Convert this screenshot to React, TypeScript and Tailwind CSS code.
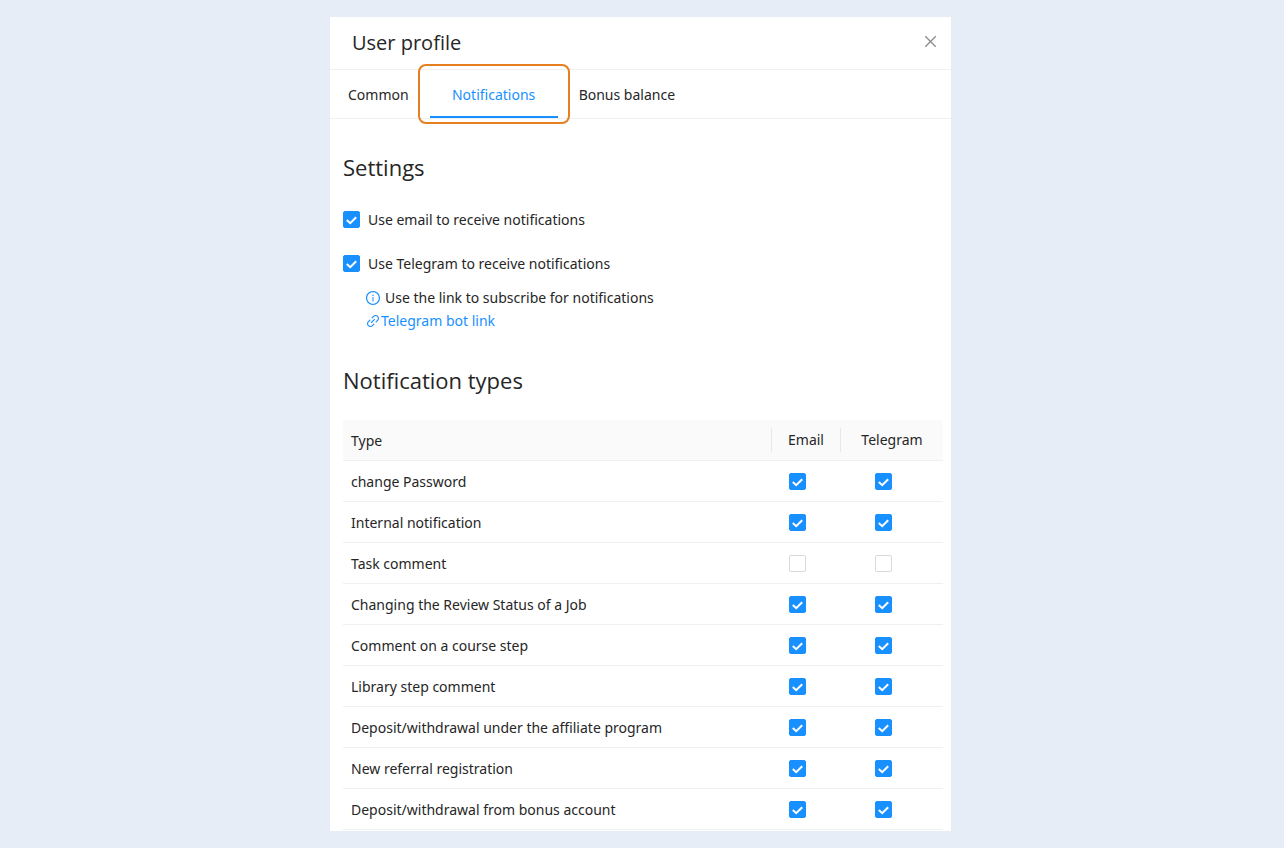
import { useState } from "react";
import { AiOutlineClose, AiOutlineInfoCircle, AiOutlineLink } from "react-icons/ai";
import clsx from "clsx";

const tabs = ["Common", "Notifications", "Bonus balance"];

const notificationTypes = [
  { name: "change Password", email: true, telegram: true },
  { name: "Internal notification", email: true, telegram: true },
  { name: "Task comment", email: false, telegram: false },
  { name: "Changing the Review Status of a Job", email: true, telegram: true },
  { name: "Comment on a course step", email: true, telegram: true },
  { name: "Library step comment", email: true, telegram: true },
  { name: "Deposit/withdrawal under the affiliate program", email: true, telegram: true },
  { name: "New referral registration", email: true, telegram: true },
  { name: "Deposit/withdrawal from bonus account", email: true, telegram: true },
];

interface CheckboxProps {
  id?: string;
  label?: string;
  defaultChecked: boolean;
}

function Checkbox({ id, label, defaultChecked }: CheckboxProps) {
  return (
    <span className="relative inline-flex size-[17px] shrink-0">
      <input
        id={id}
        type="checkbox"
        aria-label={label}
        defaultChecked={defaultChecked}
        className="peer size-full cursor-pointer appearance-none rounded-xs border border-[#d9d9d9] bg-white checked:border-[#1890ff] checked:bg-[#1890ff]"
      />
      <svg
        viewBox="0 0 17 17"
        fill="none"
        stroke="#fff"
        strokeWidth="2"
        className="pointer-events-none absolute inset-0 hidden peer-checked:block"
      >
        <path d="M3.8 9 7.2 12.2 13.2 6.2" />
      </svg>
    </span>
  );
}

export default function App() {
  const [activeTab, setActiveTab] = useState("Notifications");

  return (
    <main className="min-h-screen bg-[#e6edf6] py-[17px] pr-5 pl-[17px] font-['Noto_Sans',sans-serif] text-sm text-[#262626]">
      <section className="mx-auto max-w-[621px] bg-white pb-px">
        <header className="flex h-[53px] items-center justify-between border-b border-[#f0f0f0] pr-3 pl-[22px]">
          <h1 className="font-['Open_Sans',sans-serif] text-xl">User profile</h1>
          <button type="button" aria-label="Close" className="cursor-pointer pb-[3px] text-[#8c8c8c]">
            <AiOutlineClose size={17} />
          </button>
        </header>

        <nav className="flex h-[49px] gap-[21px] border-b border-[#f0f0f0] pl-[18px]">
          {tabs.map((tab) => (
            <button
              key={tab}
              type="button"
              onClick={() => setActiveTab(tab)}
              className={clsx(
                "relative cursor-pointer border-b-2 pt-1",
                tab === "Notifications" && "w-32",
                tab === activeTab ? "border-[#1890ff] text-[#1890ff]" : "border-transparent",
              )}
            >
              {tab}
              {tab === "Notifications" && (
                <span className="pointer-events-none absolute -inset-x-3 -top-[6px] -bottom-2 rounded-lg border-2 border-[#e67e22]" />
              )}
            </button>
          ))}
        </nav>

        <div className="pt-[30px] pr-2 pl-[13px]">
          <h2 className="font-['Open_Sans',sans-serif] text-[22px] leading-9">Settings</h2>
          <div className="mt-[23px] flex flex-col gap-[22px]">
            <div className="flex items-center gap-2">
              <Checkbox id="use-email" defaultChecked />
              <label htmlFor="use-email" className="pt-0.5">
                Use email to receive notifications
              </label>
            </div>
            <div className="flex items-center gap-2">
              <Checkbox id="use-telegram" defaultChecked />
              <label htmlFor="use-telegram" className="pt-0.5">
                Use Telegram to receive notifications
              </label>
            </div>
          </div>
          <div className="mt-3 pl-[22px] leading-[23px]">
            <p className="flex items-center gap-1">
              <AiOutlineInfoCircle size={16} className="text-[#1890ff]" />
              Use the link to subscribe for notifications
            </p>
            <a href="#telegram" className="inline-flex items-center text-[#1890ff]">
              <AiOutlineLink size={16} />
              Telegram bot link
            </a>
          </div>

          <h2 className="mt-[27px] font-['Open_Sans',sans-serif] text-[22px] leading-9">Notification types</h2>
          <table className="mt-[22px] w-full table-fixed">
            <thead>
              <tr className="h-[41px] border-b border-[#f0f0f0] bg-[#fafafa]">
                <th className="pt-0.5 pl-2 text-left font-normal">Type</th>
                <th className="w-[69px] font-normal">
                  <div className="h-6 border-l border-[#e8e8e8] pt-0.5">Email</div>
                </th>
                <th className="w-[103px] font-normal">
                  <div className="h-6 border-l border-[#e8e8e8] pt-0.5">Telegram</div>
                </th>
              </tr>
            </thead>
            <tbody>
              {notificationTypes.map((item) => (
                <tr key={item.name} className="h-[41px] border-b border-[#f0f0f0]">
                  <td className="pt-0.5 pl-2">{item.name}</td>
                  <td className="pr-4">
                    <div className="flex justify-center">
                      <Checkbox label={`${item.name}: email`} defaultChecked={item.email} />
                    </div>
                  </td>
                  <td className="pr-4">
                    <div className="flex justify-center">
                      <Checkbox label={`${item.name}: Telegram`} defaultChecked={item.telegram} />
                    </div>
                  </td>
                </tr>
              ))}
            </tbody>
          </table>
        </div>
      </section>
    </main>
  );
}
